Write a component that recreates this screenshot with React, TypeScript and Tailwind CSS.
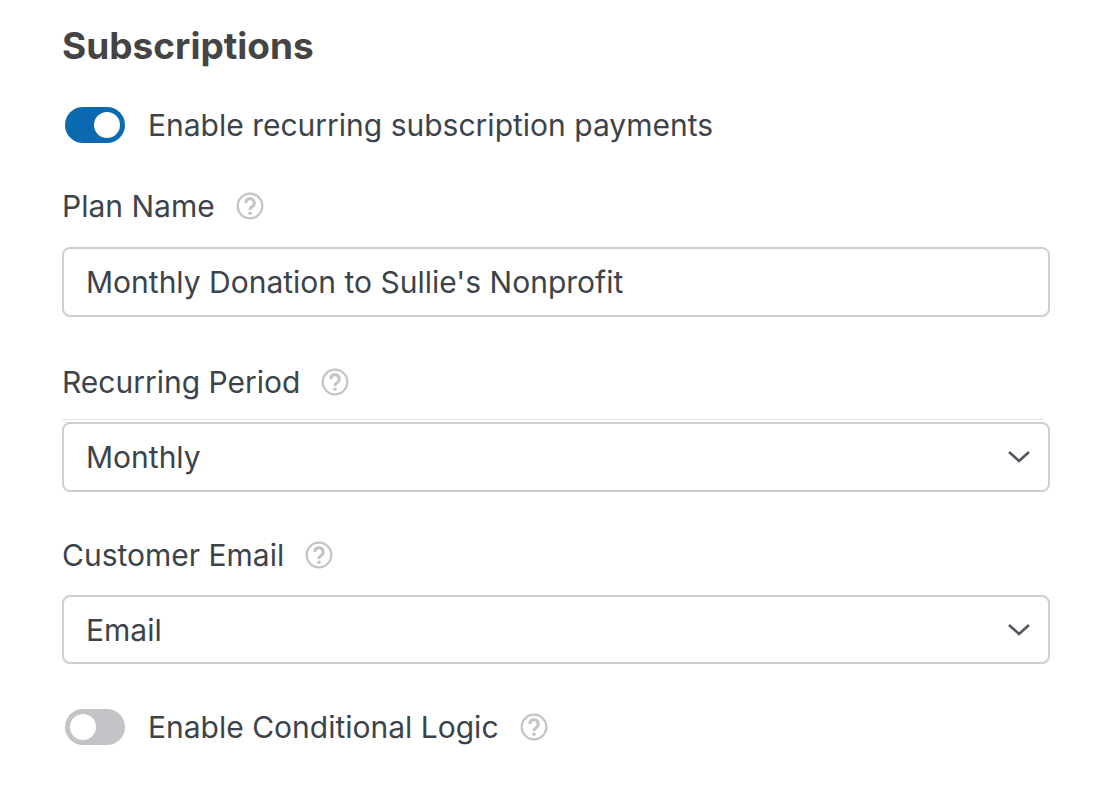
import React from 'react';

const HelpIcon: React.FC = () => (
  <svg width="28" height="28" viewBox="0 0 28 28" className="shrink-0">
    <circle cx="14" cy="14" r="12.3" fill="none" stroke="#c3c4c7" strokeWidth="2.3" />
    <path d="M9.8 11 a4.2 4.2 0 1 1 6 3.8 c-1.2 .6-1.8 1.3-1.8 2.6 v0.6" fill="none" stroke="#c3c4c7" strokeWidth="3" strokeLinecap="butt" />
    <circle cx="14" cy="21.3" r="1.8" fill="#c3c4c7" />
  </svg>
);

const Toggle: React.FC<{ on: boolean }> = ({ on }) => (
  <div className={`w-[60px] h-[36px] rounded-full flex items-center px-[5px] shrink-0 ml-[3px] ${on ? 'bg-[#0b6aaf] justify-end' : 'bg-[#c3c4c7] justify-start'}`}>
    <div className="w-[26px] h-[26px] rounded-full bg-white" />
  </div>
);

const Chevron: React.FC = () => (
  <svg width="24" height="14" viewBox="0 0 24 14" className="shrink-0">
    <path d="M2 2 L12 11 L22 2" fill="none" stroke="#50575e" strokeWidth="2.6" />
  </svg>
);

const Label: React.FC<{ text: string }> = ({ text }) => (
  <div className="flex items-center gap-[21px] h-[34px]">
    <span>{text}</span>
    <HelpIcon />
  </div>
);

const App: React.FC = () => {
  return (
    <div className="w-[1116px] h-[793px] bg-white text-[#3c434a] text-[30px] leading-none" style={{ fontFamily: 'Inter, "Liberation Sans", sans-serif' }}>
      <div className="pl-[62px] pr-[66px] pt-[23px]">
        <h2 className="text-[37px] font-bold text-[#444] h-[44px] flex items-center">Subscriptions</h2>

        <div className="flex items-center gap-[23px] mt-[40px]">
          <Toggle on />
          <span>Enable recurring subscription payments</span>
        </div>

        <div className="mt-[46px]">
          <Label text="Plan Name" />
          <div className="mt-[24px] h-[70px] border-2 border-[#cfcfcf] rounded-[8px] flex items-center pl-[22px] pr-[23px]">
            Monthly Donation to Sullie's Nonprofit
          </div>
        </div>

        <div className="mt-[48px]">
          <Label text="Recurring Period" />
          <div className="mt-[20px] border-t border-[#dce3ea] mr-[6px]" />
          <div className="mt-[2px] h-[70px] border-2 border-[#cfcfcf] rounded-[8px] flex items-center justify-between pl-[22px] pr-[17px]">
            <span>Monthly</span>
            <Chevron />
          </div>
        </div>

        <div className="mt-[46px]">
          <Label text="Customer Email" />
          <div className="mt-[23px] h-[69px] border-2 border-[#cfcfcf] rounded-[8px] flex items-center justify-between pl-[22px] pr-[17px]">
            <span>Email</span>
            <Chevron />
          </div>
        </div>

        <div className="flex items-center mt-[45px]">
          <Toggle on={false} />
          <span className="ml-[23px]">Enable Conditional Logic</span>
          <span className="ml-[21px]"><HelpIcon /></span>
        </div>
      </div>
    </div>
  );
};

export default App;
